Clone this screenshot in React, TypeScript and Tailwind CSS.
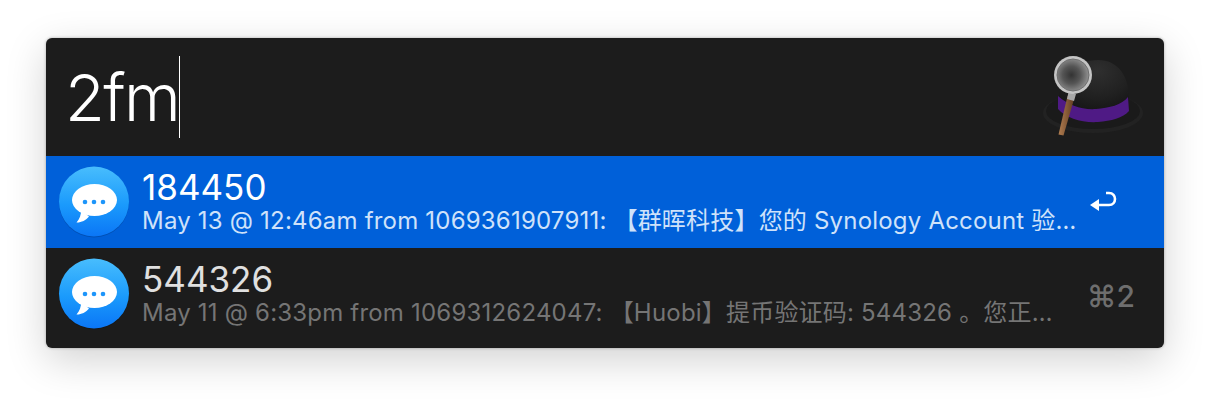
import { useId } from "react"

const font = "font-['Inter','Noto_Sans_CJK_SC',sans-serif]"

function MessagesIcon() {
  const id = useId()
  return (
    <svg width="72" height="72" viewBox="0 0 72 72" className="shrink-0">
      <defs>
        <linearGradient id={id} x1="0" y1="0" x2="0" y2="1">
          <stop offset="0" stopColor="#48bdfd" />
          <stop offset="0.55" stopColor="#1a9afc" />
          <stop offset="1" stopColor="#0b76f6" />
        </linearGradient>
      </defs>
      <circle cx="36" cy="36.500" r="35" fill="#000" opacity="0.16" />
      <circle cx="36" cy="35.500" r="35" fill={`url(#${id})`} />
      <ellipse cx="36.500" cy="34" rx="22.500" ry="16" fill="#fff" />
      <path d="M23 44c.4 4.500-1.500 9-4.500 12.500 4.500.2 9.500-2 12.500-6z" fill="#fff" />
      <circle cx="27" cy="36" r="2.300" fill="#1d95fa" />
      <circle cx="36" cy="36" r="2.300" fill="#1d95fa" />
      <circle cx="45" cy="36" r="2.300" fill="#1d95fa" />
    </svg>
  )
}

function HatLogo() {
  const id = useId()
  return (
    <svg width="106" height="88" viewBox="0 0 106 88" className="shrink-0">
      <defs>
        <radialGradient id={`${id}crown`} cx="0.55" cy="0.2" r="0.75">
          <stop offset="0" stopColor="#2f2f2f" />
          <stop offset="0.6" stopColor="#212121" />
          <stop offset="1" stopColor="#151515" />
        </radialGradient>
        <radialGradient id={`${id}lens`} cx="0.45" cy="0.5" r="0.55">
          <stop offset="0" stopColor="#333" />
          <stop offset="0.5" stopColor="#555" />
          <stop offset="1" stopColor="#929292" />
        </radialGradient>
        <linearGradient id={`${id}stick`} x1="0" y1="0" x2="1" y2="0">
          <stop offset="0" stopColor="#b07d50" />
          <stop offset="1" stopColor="#5f3a20" />
        </linearGradient>
      </defs>
      <ellipse cx="53" cy="63" rx="50" ry="20" fill="#222" />
      <ellipse cx="53" cy="61" rx="47" ry="18" fill="#1a1a1a" />
      <path d="M19 50C20 24 36 10 58 10c20 0 31 16 31 38 0 10-16 18-36 18S18 60 19 50z" fill={`url(#${id}crown)`} />
      <path d="M18 46c10 9 24 14 38 13 13-1 26-4 32-12l1 14c-6 7-18 10-31 11-16 1-32-4-40-13z" fill="#4f1a85" />
      <path d="M27.500 46 34.500 47.500 23.500 85.500 18.500 84.500z" fill={`url(#${id}stick)`} />
      <path d="M28.500 42 36 44 34 51 27 49z" fill="#a8a8a8" />
      <circle cx="33" cy="25" r="19" fill="#c4c4c4" />
      <circle cx="33" cy="25" r="16" fill={`url(#${id}lens)`} stroke="#6f6f6f" strokeWidth="1" />
    </svg>
  )
}

function ResultRow({
  title,
  sub,
  selected,
  shortcut,
}: {
  title: string
  sub: string
  selected?: boolean
  shortcut: React.ReactNode
}) {
  return (
    <div className={`flex h-[92px] items-center pl-[12px] ${selected ? "bg-[#0060d9]" : ""}`}>
      <MessagesIcon />
      <div className="ml-[12px] w-[940px] -mt-[3px] min-w-0">
        <div className={`text-[35px] leading-[40px] ${selected ? "text-white" : "text-[#e0e0e0]"}`}>{title}</div>
        <div className={`whitespace-nowrap text-[24px] leading-[28px] tracking-[0.2px] ${selected ? "text-[#cfe2fa]" : "text-[#757575]"}`}>{sub}</div>
      </div>
      {shortcut}
    </div>
  )
}

export default function App() {
  return (
    <div className={`h-[402px] w-[1210px] bg-white pt-[38px] pl-[46px] ${font}`}>
      <div className="h-[310px] w-[1118px] overflow-hidden rounded-[6px] bg-[#1c1c1c] shadow-[0_12px_40px_rgba(0,0,0,0.18),0_0_3px_rgba(0,0,0,0.3)]">
        <div className="flex h-[118px] items-start justify-between pr-[18px] pl-[19px] pt-[12px]">
          <div className="mt-[6px] flex items-center">
            <span className="text-[65px] leading-none font-light tracking-[-1.6px] text-white">2fm</span>
            <span className="h-[82px] w-[1px] bg-white" />
          </div>
          <HatLogo />
        </div>
        <ResultRow
          selected
          title="184450"
          sub="May 13 @ 12:46am from 1069361907911: 【群晖科技】您的 Synology Account 验…"
          shortcut={
            <svg width="28" height="24" viewBox="0 0 28 24" fill="none" stroke="#fff" className="ml-auto mr-[46px] mt-[-4px]">
              <path d="M6 17h13c8 0 8-12 0-12h-3" strokeWidth="2.600" />
              <path d="M0 17 9 11v12z" fill="#fff" stroke="none" />
            </svg>
          }
        />
        <ResultRow
          title="544326"
          sub="May 11 @ 6:33pm from 1069312624047: 【Huobi】提币验证码: 544326 。您正…"
          shortcut={<span className="ml-auto mr-[29px] mt-[4px] text-[30px] leading-none font-medium text-[#6e6e6e]">⌘2</span>}
        />
      </div>
    </div>
  )
}
